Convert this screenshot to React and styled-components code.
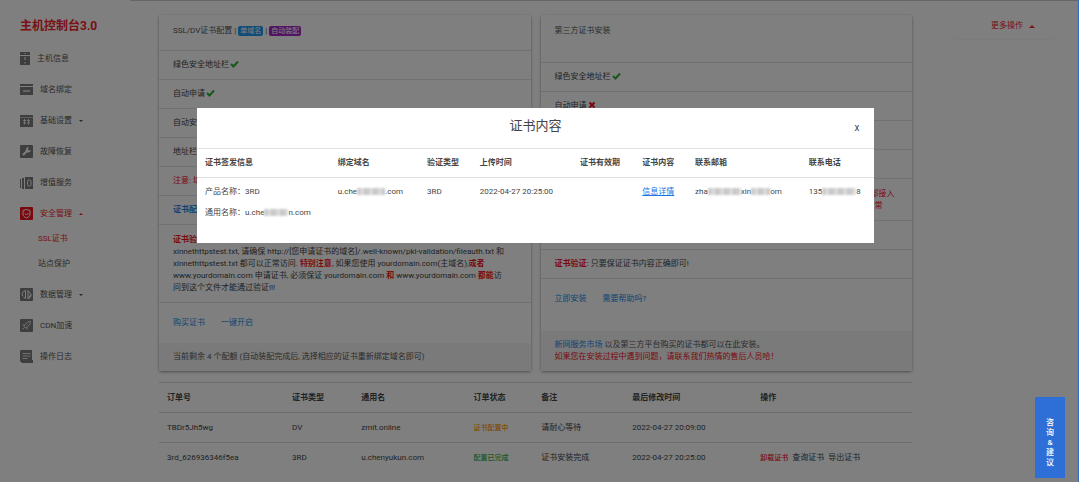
import React from 'react';
import styled, { createGlobalStyle } from 'styled-components';

const GlobalStyle = createGlobalStyle`
    * {
        box-sizing: border-box;
    }
    body {
        margin: 0;
        background: #fff;
        color: #444;
        font-family: Roboto, 'Noto Sans CJK SC', sans-serif;
        font-size: 8px;
        line-height: 12px;
        overflow: hidden;
    }
    button {
        padding: 0;
        border: 0;
        background: none;
        color: inherit;
        font: inherit;
        cursor: pointer;
    }
    a {
        color: inherit;
        text-decoration: none;
    }
`;

const Page = styled.div`
    display: flex;
    min-height: 100vh;
`;

const Sidebar = styled.aside`
    flex: 0 0 127px;
    padding: 17px 0 0 20px;
    border-right: 1px solid #fafafa;
`;

const Brand = styled.h1`
    margin: 0 0 8px;
    color: #f5222d;
    font-size: 12px;
    line-height: 18px;
`;

const NavItem = styled.a`
    display: flex;
    align-items: center;
    gap: 7px;
    height: 31px;
    color: ${p => (p.$active ? '#f5222d' : '#555')};
`;

const NavIcon = styled.svg`
    width: ${p => (p.$narrow ? 10 : 13)}px;
    height: 13px;
    fill: none;
    stroke: #fff;
    color: ${p => (p.$active ? '#f5121d' : '#7c7c7c')};
`;

const SubItem = styled.a`
    display: block;
    margin: 0 0 5px 18px;
    line-height: 20px;
    color: ${p => (p.$active ? '#f5222d' : '#555')};
`;

const Caret = styled.span`
    border: ${p => p.$size || 2}px solid transparent;
    ${p =>
        p.$up
            ? 'border-top-width: 0; border-bottom-color: currentColor;'
            : 'border-bottom-width: 0; border-top-color: currentColor;'}
`;

const Main = styled.div`
    flex: 1;
    display: flex;
    align-items: flex-start;
    gap: 43px;
    margin-left: 3px;
    padding: 14px 26px 0 29px;
    border-top: 1px solid #ccc;
`;

const Content = styled.main`
    flex: 1;
`;

const Cards = styled.div`
    display: grid;
    grid-template-columns: 1fr 1fr;
    gap: 10px;
    margin-bottom: 11px;
`;

const Card = styled.section`
    display: flex;
    flex-direction: column;
    min-width: 0;
    border-radius: 2px;
    box-shadow: 0 1px 3px rgba(0, 0, 0, 0.4);
`;

const CardHeader = styled.h2`
    margin: 0;
    padding: 10px 14px ${p => (p.$tall ? 25 : 13)}px;
    color: #555;
    font-size: 8px;
    font-weight: 400;
    line-height: 12px;
`;

const CardRow = styled.div`
    padding: ${p => (p.$block ? 9 : 8)}px 14px 8px;
    border-top: 1px solid #e2e2e2;
    white-space: nowrap;
    overflow: hidden;
    color: ${p => p.$color || 'inherit'};
`;

const CardActions = styled.div`
    flex: 1;
    display: flex;
    gap: 16px;
    padding: 14px;
    border-top: 1px solid #e2e2e2;
    color: #1e88e5;
`;

const CardFooter = styled.div`
    padding: 8px 14px;
    background: #f5f5f5;
    color: #555;
`;

const Badge = styled.span`
    display: inline-block;
    padding: 0 2px;
    border-radius: 2px;
    background: ${p => p.$color};
    color: #fff;
    font-size: 7px;
    line-height: 10px;
`;

const Mark = styled.svg`
    width: 9px;
    height: 8px;
    margin-left: 1px;
    vertical-align: -1px;
    fill: none;
    stroke-width: 2;
`;

const Red = styled.b`
    color: #f5121d;
`;

const RedText = styled.span`
    color: #f5121d;
`;

const BlueLink = styled.a`
    color: #1e88e5;
`;

const Table = styled.table`
    width: 100%;
    border-collapse: collapse;
    table-layout: fixed;
    th,
    td {
        padding: ${p => (p.$dense ? 8 : 9)}px 0 8px 8px;
        border-top: 1px solid ${p => p.$line};
        text-align: left;
        vertical-align: top;
        white-space: nowrap;
    }
`;

const Status = styled.span`
    color: ${p => p.$color};
    font-size: 7px;
    font-weight: 500;
`;

const RowAction = styled.button`
    margin-right: 4px;
`;

const MoreButton = styled.button`
    flex: 0 0 98px;
    display: flex;
    align-items: center;
    justify-content: center;
    gap: 6px;
    padding: 5px 0 7px 18px;
    color: #f5222d;
    box-shadow: 0 1px 2px rgba(0, 0, 0, 0.05);
`;

const Overlay = styled.div`
    position: fixed;
    inset: 0;
    display: flex;
    align-items: flex-start;
    justify-content: center;
    padding: 108px 7px 0 0;
    border-right: 1px solid #2f6cc4;
    background: rgba(0, 0, 0, 0.5);
`;

const Modal = styled.div`
    width: 63.2%;
    padding-bottom: 7px;
    background: #fff;
`;

const ModalHeader = styled.header`
    display: grid;
    grid-template-columns: 34px 1fr 34px;
    align-items: center;
    height: 40px;
    h2 {
        grid-column: 2;
        margin: 0;
        color: #444;
        font-size: 13px;
        font-weight: 400;
        line-height: 36px;
        height: 40px;
        text-align: center;
    }
`;

const CloseButton = styled.button`
    && {
        font-size: 10px;
    }
`;

const Line = styled.div`
    line-height: 21px;
    margin: -5px 0 5px;
`;

const DetailLink = styled.a`
    color: #1a73e8;
    text-decoration: underline;
`;

const Mask = styled.span`
    display: inline-block;
    width: ${p => p.$width}px;
    height: 7px;
    background: repeating-linear-gradient(90deg, #ccc 0 4px, #ddd 4px 7px, #c4c4c4 7px 9px);
    filter: blur(1px);
    vertical-align: -1px;
`;

const FeedbackTab = styled.button`
    && {
        position: fixed;
        right: 14px;
        bottom: 4px;
        width: 30px;
        height: 81px;
        padding: 11px 10px 0;
        background: #2d6fd6;
        color: #fff;
        font-weight: 500;
        line-height: 10px;
        word-break: break-all;
    }
`;

const icons = {
    host: (
        <>
            <path d="M0 0h10v3H0zM0 4h10v9H0z" fill="currentColor" stroke="none" />
            <path d="M5 1v1M5 5v3M5 10v1.500" />
        </>
    ),
    domain: (
        <>
            <path d="M0 1h13v2H0zM0 4h13v8H0z" fill="currentColor" stroke="none" />
            <path d="M3 7l1 2 1-2 1 2 1-2 1 2 1-2 1 2" strokeWidth=".7" />
        </>
    ),
    settings: (
        <>
            <path d="M0 1h13v2H0zM0 3.500h13V13H0z" fill="currentColor" stroke="none" />
            <path d="M4.500 5v5.500M8.500 5v5.500M3 6.500h3M3 9h3M7 6.500h3M7 9h3" strokeWidth=".8" />
        </>
    ),
    repair: (
        <>
            <rect width="13" height="13" rx="1" fill="currentColor" stroke="none" />
            <path d="M3 10l4-4" strokeWidth="2" />
            <path d="M9 2.500A2.500 2.500 0 1 0 10.800 5L9 5.500 7.700 4.500z" fill="#fff" stroke="none" />
        </>
    ),
    addon: (
        <>
            <path d="M0 3h1v9H0zM2 2h2v11H2zM5 1h8v12H5z" fill="currentColor" stroke="none" />
            <rect x="7.500" y="4" width="3.500" height="6" rx="1.500" />
        </>
    ),
    safe: (
        <>
            <rect width="13" height="13" rx="1" fill="currentColor" stroke="none" />
            <path d="M3 3.500l3.500-1 3.500 1V7c0 2-1.500 3.200-3.500 4C4.500 10.200 3 9 3 7z" />
            <path d="M5 6.500l1.500 1.500L8.500 6" />
        </>
    ),
    data: (
        <>
            <rect width="13" height="13" rx="1" fill="currentColor" stroke="none" />
            <path d="M5.500 2.500A4 4 0 0 0 2.500 8M5.500 2.500v8L3.500 9M8 10.500v-8l3 4zM8 10.500c2 0 3-1.500 3-4" />
        </>
    ),
    cdn: (
        <>
            <rect width="13" height="13" rx="1" fill="currentColor" stroke="none" />
            <path
                d="M4 7.500c1-3 3.500-5 6.500-5 0 3-2 5.500-5 6.500zM4 6H2.500M7 9v1.500M2.500 10.500l2-2M7.500 5.500l-1 1"
                strokeWidth=".8"
            />
        </>
    ),
    log: (
        <>
            <path d="M1 0h11v10h1v3H2L0 11V1z" fill="currentColor" stroke="none" />
            <path d="M2.500 3.500h8M2.500 6h8M2.500 8.500h5" strokeWidth=".8" />
        </>
    )
};

const menu = [
    { icon: 'host', label: '主机信息', narrow: true },
    { icon: 'domain', label: '域名绑定' },
    { icon: 'settings', label: '基础设置', caret: true },
    { icon: 'repair', label: '故障恢复' },
    { icon: 'addon', label: '增值服务' },
    { icon: 'safe', label: '安全管理', caret: true, active: true, children: ['SSL证书', '站点保护'] },
    { icon: 'data', label: '数据管理', caret: true },
    { icon: 'cdn', label: 'CDN加速' },
    { icon: 'log', label: '操作日志' }
];

const orders = [
    {
        id: 'TBDr5Jh5wg',
        type: 'DV',
        name: 'zmit.online',
        status: '证书配置中',
        color: '#ff9800',
        note: '请耐心等待',
        time: '2022-04-27 20:09:00'
    },
    {
        id: '3rd_626936346f5ea',
        type: '3RD',
        name: 'u.chenyukun.com',
        status: '配置已完成',
        color: '#2fae3b',
        note: '证书安装完成',
        time: '2022-04-27 20:25:00',
        actions: true
    }
];

const Check = () => (
    <Mark viewBox="0 0 9 8" stroke="#2fae3b">
        <path d="M1 4l2.500 2.500L8 1.500" />
    </Mark>
);

const Cross = () => (
    <Mark viewBox="0 0 9 8" stroke="#f5121d">
        <path d="M1.500 1.500l5 5M6.500 1.500l-5 5" />
    </Mark>
);

const Columns = ({ widths }) => (
    <colgroup>
        {widths.map((w, i) => (
            <col key={i} style={{ width: `${w}%` }} />
        ))}
    </colgroup>
);

const Navigation = () => (
    <Sidebar>
        <Brand>主机控制台3.0</Brand>
        <nav>
            {menu.map(item => (
                <React.Fragment key={item.label}>
                    <NavItem href="#" $active={item.active}>
                        <NavIcon
                            viewBox={item.narrow ? '0 0 10 13' : '0 0 13 13'}
                            $narrow={item.narrow}
                            $active={item.active}
                        >
                            {icons[item.icon]}
                        </NavIcon>
                        {item.label}
                        {item.caret && <Caret $up={item.active} />}
                    </NavItem>
                    {item.children &&
                        item.children.map((child, i) => (
                            <SubItem href="#" key={child} $active={i === 0}>
                                {child}
                            </SubItem>
                        ))}
                </React.Fragment>
            ))}
        </nav>
    </Sidebar>
);

const DvCard = () => (
    <Card>
        <CardHeader>
            SSL/DV证书配置 | <Badge $color="#1e9af0">单域名</Badge> | <Badge $color="#a626c4">自动装配</Badge>
        </CardHeader>
        <CardRow>绿色安全地址栏<Check /></CardRow>
        <CardRow>自动申请<Check /></CardRow>
        <CardRow>自动安装<Check /></CardRow>
        <CardRow>地址栏显示<Check /></CardRow>
        <CardRow $color="#f5121d">注意: 域名需解析到主机</CardRow>
        <CardRow><BlueLink href="#"><b>证书配置</b></BlueLink></CardRow>
        <CardRow $block>
            <Red>证书验证:</Red> 系统会自动生成验证文件
            <br />
            xinnethttpstest.txt, 请确保 http://[您申请证书的域名]/.well-known/pki-validation/fileauth.txt 和
            <br />
            xinnethttpstest.txt 都可以正常访问. <Red>特别注意</Red>, 如果您使用 yourdomain.com(主域名),<Red>或者</Red>
            <br />
            www.yourdomain.com 申请证书, 必须保证 yourdomain.com <Red>和</Red> www.yourdomain.com <Red>都能</Red>访
            <br />
            问到这个文件才能通过验证!!!
        </CardRow>
        <CardActions>
            <a href="#">购买证书</a>
            <a href="#">一键开启</a>
        </CardActions>
        <CardFooter>当前剩余 4 个配额 (自动装配完成后, 选择相应的证书重新绑定域名即可)</CardFooter>
    </Card>
);

const ThirdPartyCard = () => (
    <Card>
        <CardHeader $tall>第三方证书安装</CardHeader>
        <CardRow>绿色安全地址栏<Check /></CardRow>
        <CardRow>自动申请<Cross /></CardRow>
        <CardRow>自动安装<Check /></CardRow>
        <CardRow>多域名证书<Check /></CardRow>
        <CardRow $block $color="#f5121d">
            注意: 安装证书之前请先确认域名已经完成备案并且解析到当前主机否则该证书将无法被全部接入
            <br />
            安装完成之后请使用浏览器访问站点首页并检查地址栏中的安全标识状态是否正确并确认正常
        </CardRow>
        <CardRow><BlueLink href="#">证书配置</BlueLink></CardRow>
        <CardRow>
            <Red>证书验证:</Red> 只要保证证书内容正确即可!
        </CardRow>
        <CardActions>
            <a href="#">立即安装</a>
            <a href="#">需要帮助吗?</a>
        </CardActions>
        <CardFooter>
            <BlueLink href="#">新网服务市场</BlueLink> 以及第三方平台购买的证书都可以在此安装。
            <br />
            <RedText>如果您在安装过程中遇到问题，请联系我们热情的售后人员哈！</RedText>
        </CardFooter>
    </Card>
);

const Orders = () => (
    <Table $line="#d8d8d8">
        <Columns widths={[16.6, 9.2, 14.9, 9, 12.1, 17, 21.2]} />
        <thead>
            <tr>
                {['订单号', '证书类型', '通用名', '订单状态', '备注', '最后修改时间', '操作'].map(h => (
                    <th key={h}>{h}</th>
                ))}
            </tr>
        </thead>
        <tbody>
            {orders.map(o => (
                <tr key={o.id}>
                    <td>{o.id}</td>
                    <td>{o.type}</td>
                    <td>{o.name}</td>
                    <td><Status $color={o.color}>{o.status}</Status></td>
                    <td>{o.note}</td>
                    <td>{o.time}</td>
                    <td>
                        {o.actions && (
                            <>
                                <RowAction><Status $color="#f5121d">卸载证书</Status></RowAction>
                                <RowAction>查询证书</RowAction>
                                <RowAction>导出证书</RowAction>
                            </>
                        )}
                    </td>
                </tr>
            ))}
        </tbody>
    </Table>
);

const CertificateModal = () => (
    <Overlay>
        <Modal role="dialog" aria-label="证书内容">
            <ModalHeader>
                <h2>证书内容</h2>
                <CloseButton>x</CloseButton>
            </ModalHeader>
            <Table $dense $line="#e0e0e0">
                <Columns widths={[19.6, 13.2, 7.8, 14.8, 9.2, 7.8, 16.8, 10.8]} />
                <thead>
                    <tr>
                        {['证书签发信息', '绑定域名', '验证类型', '上传时间', '证书有效期', '证书内容', '联系邮箱', '联系电话'].map(h => (
                            <th key={h}>{h}</th>
                        ))}
                    </tr>
                </thead>
                <tbody>
                    <tr>
                        <td>
                            <Line>产品名称：3RD</Line>
                            <Line>通用名称：u.che<Mask $width={24} />n.com</Line>
                        </td>
                        <td>u.che<Mask $width={28} />.com</td>
                        <td>3RD</td>
                        <td>2022-04-27 20:25:00</td>
                        <td />
                        <td><DetailLink href="#">信息详情</DetailLink></td>
                        <td>zha<Mask $width={33} />xin<Mask $width={19} />om</td>
                        <td>135<Mask $width={34} />8</td>
                    </tr>
                </tbody>
            </Table>
        </Modal>
    </Overlay>
);

const App = () => (
    <>
        <GlobalStyle />
        <Page>
            <Navigation />
            <Main>
                <Content>
                    <Cards>
                        <DvCard />
                        <ThirdPartyCard />
                    </Cards>
                    <Orders />
                </Content>
                <MoreButton>
                    更多操作 <Caret $up $size={3} />
                </MoreButton>
            </Main>
        </Page>
        <CertificateModal />
        <FeedbackTab>咨询&amp;建议</FeedbackTab>
    </>
);

export default App;
